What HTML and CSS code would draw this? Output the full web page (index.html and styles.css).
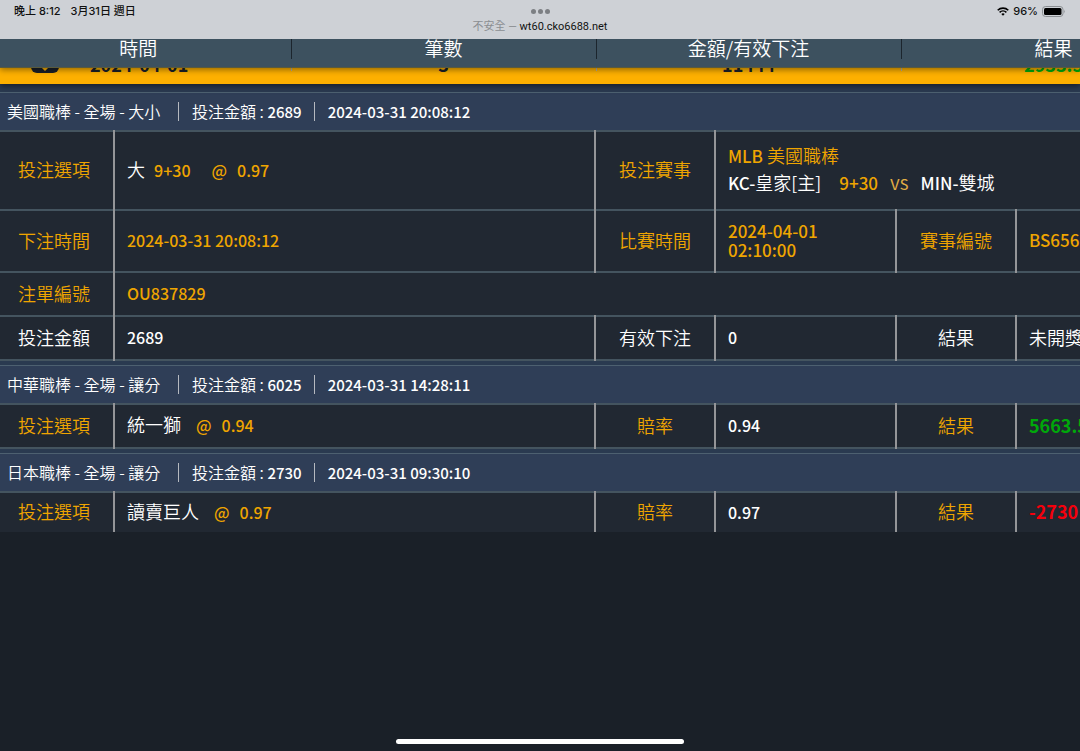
FILE: index.html
```html
<!DOCTYPE html>
<html lang="zh-Hant">
<head>
  <meta charset="UTF-8" />
  <meta name="viewport" content="width=device-width, initial-scale=1.0"/>
  <title>wt60.cko6688.net</title>
  <link rel="stylesheet" href="styles.css">
</head>
<body>

  <!-- Tablet status bar -->
  <div class="status-bar">
    <div class="status-left"><span>晚上 8:12</span><span>3月31日 週日</span></div>
    <div class="status-center">
      <div class="dots"><i></i><i></i><i></i></div>
      <div class="address"><span>不安全 —</span> wt60.cko6688.net</div>
    </div>
    <div class="status-right">
      <svg class="wifi" viewBox="0 0 12 9">
        <path d="M6 8.8 4.3 7a2.5 2.5 0 0 1 3.4 0z" fill="#000"/>
        <path d="M2.6 5.4a4.9 4.9 0 0 1 6.8 0M.7 3.3a7.6 7.6 0 0 1 10.6 0" fill="none" stroke="#000" stroke-width="1.6"/>
      </svg>
      <span>96%</span>
      <svg class="battery" viewBox="0 0 24 11">
        <rect x=".5" y=".5" width="20.5" height="10" rx="3" fill="none" stroke="#8b8f93"/>
        <rect x="2" y="2" width="17.5" height="7" rx="1.5" fill="#000"/>
        <path d="M22.2 3.8q1.5 1.7 0 3.4z" fill="#8b8f93"/>
      </svg>
    </div>
  </div>

  <main>
    <div class="columns head">
      <div>時間</div>
      <div>筆數</div>
      <div>金額/有效下注</div>
      <div>結果</div>
    </div>

    <div class="columns summary">
      <div class="day">
        <svg class="toggle" viewBox="0 0 28 25">
          <rect width="28" height="25" rx="6" fill="#1a2028"/>
          <path d="M8 15l6 6 6-6" fill="none" stroke="#fdb000" stroke-width="3"/>
        </svg>
        2024-04-01
      </div>
      <div>3</div>
      <div>11444</div>
      <div class="win">2933.5</div>
    </div>

    <section class="bet">
      <h2><span>美國職棒 - 全場 - 大小</span><span>投注金額 : <b>2689</b></span><span><b>2024-03-31 20:08:12</b></span></h2>
      <table>
        <colgroup><col class="label first"><col><col class="label"><col class="value"><col class="label"><col class="value"></colgroup>
        <tr class="tall gold">
          <th>投注選項</th>
          <td><span class="white">大</span> <b class="line">9+30</b> <b class="odds">@</b> <b>0.97</b></td>
          <th>投注賽事</th>
          <td class="event" colspan="3">
            <b>MLB</b> 美國職棒<br>
            <span class="white"><b>KC-</b>皇家[主]</span> <b class="handicap">9+30</b> <span class="vs">vs</span> <span class="white"><b>MIN-</b>雙城</span>
          </td>
        </tr>
        <tr class="medium gold">
          <th>下注時間</th>
          <td><b>2024-03-31 20:08:12</b></td>
          <th>比賽時間</th>
          <td class="event two-line"><b>2024-04-01<br>02:10:00</b></td>
          <th>賽事編號</th>
          <td class="event"><b>BS656</b></td>
        </tr>
        <tr class="gold">
          <th>注單編號</th>
          <td colspan="5"><b>OU837829</b></td>
        </tr>
        <tr>
          <th>投注金額</th>
          <td><b>2689</b></td>
          <th>有效下注</th>
          <td><b>0</b></td>
          <th>結果</th>
          <td>未開獎</td>
        </tr>
      </table>
    </section>

    <section class="bet">
      <h2><span>中華職棒 - 全場 - 讓分</span><span>投注金額 : <b>6025</b></span><span><b>2024-03-31 14:28:11</b></span></h2>
      <table>
        <colgroup><col class="label first"><col><col class="label"><col class="value"><col class="label"><col class="value"></colgroup>
        <tr class="gold">
          <th>投注選項</th>
          <td><span class="white">統一獅</span> <b class="at">@</b> <b>0.94</b></td>
          <th>賠率</th>
          <td class="white"><b>0.94</b></td>
          <th>結果</th>
          <td class="win"><b>5663.5</b></td>
        </tr>
      </table>
    </section>

    <section class="bet">
      <h2><span>日本職棒 - 全場 - 讓分</span><span>投注金額 : <b>2730</b></span><span><b>2024-03-31 09:30:10</b></span></h2>
      <table>
        <colgroup><col class="label first"><col><col class="label"><col class="value"><col class="label"><col class="value"></colgroup>
        <tr class="gold last">
          <th>投注選項</th>
          <td><span class="white">讀賣巨人</span> <b class="at">@</b> <b>0.97</b></td>
          <th>賠率</th>
          <td class="white"><b>0.97</b></td>
          <th>結果</th>
          <td class="lose"><b>-2730</b></td>
        </tr>
      </table>
    </section>
  </main>

  <div class="home-bar"></div>

</body>
</html>
```
FILE: styles.css
```css
* {
  box-sizing: border-box;
}

body {
  margin: 0;
  min-height: 100vh;
  display: flex;
  flex-direction: column;
  overflow: hidden;
  background: #1a2028;
  color: white;
  font-family: "Noto Sans CJK TC", sans-serif;
}

/* Status bar */
.status-bar {
  position: relative;
  z-index: 3;
  display: grid;
  grid-template-columns: 1fr auto 1fr;
  height: 39px;
  padding: 0 14px;
  background: #ced1d6;
  color: #111;
  font: 500 11px/22px Inter, "Noto Sans CJK TC", sans-serif;
}

.status-left {
  display: flex;
  gap: 10px;
}

.status-right {
  display: flex;
  justify-content: flex-end;
  align-items: center;
  gap: 4px;
  height: 22px;
}

.wifi {
  width: 12px;
  height: 9px;
}

.battery {
  width: 24px;
  height: 11px;
}

.dots {
  display: flex;
  justify-content: center;
  gap: 2px;
  padding-top: 9px;
}

.dots i {
  width: 5px;
  height: 5px;
  border-radius: 50%;
  background: #7c7f83;
}

.address {
  font-family: Roboto, "Noto Sans CJK TC", sans-serif;
  font-weight: 400;
  line-height: 26px;
}

.address span {
  color: #8b8e92;
}

main {
  flex: 1;
}

/* Header and day summary */
.columns {
  display: grid;
  grid-template-columns: 27% repeat(3, 305px);
  text-align: center;
}

.head {
  position: relative;
  z-index: 2;
  height: 29px;
  padding-bottom: 8px;
  background: #3d515f;
  border-bottom: 1px solid #5a5a3c;
  font-size: 19px;
  font-weight: 350;
  line-height: 18px;
  box-shadow: 0 2px 6px rgba(0,0,0,0.4);
}

.head div {
  border-right: 1px solid #1c252d;
}

.head div:first-child {
  padding-right: 14px;
}

.summary {
  position: relative;
  grid-template-rows: 23px;
  height: 36px;
  margin-top: -20px;
  background: #fdb000;
  color: #1a2028;
  font-size: 18px;
  font-weight: 700;
  line-height: 32px;
  box-shadow: 0 2px 6px rgba(0,0,0,0.5);
}

.summary div {
  border-right: 1px solid #aaa;
}

.day {
  display: flex;
  align-items: flex-start;
  gap: 31px;
  padding-left: 31px;
}

.toggle {
  width: 28px;
  height: 25px;
}

/* Bets */
.bet {
  padding-top: 4px;
  background: #2a3a50;
}

.summary + .bet {
  padding-top: 8px;
}

.bet h2 {
  display: flex;
  align-items: center;
  height: 38px;
  margin: 0;
  padding: 0 0 1px 7px;
  border-top: 1px solid #4d6070;
  background: #2f3e57;
  font-size: 16px;
  font-weight: 350;
  line-height: 18px;
}

.bet h2 span:first-child {
  min-width: 159px;
}

.bet h2 span + span {
  margin-left: 12px;
  padding-left: 13px;
  border-left: 1px solid #b5b9c0;
}

b {
  font-weight: 500;
  font-size: 16px;
}

.bet h2 b {
  font-size: 15px;
}

table {
  width: calc(100% + 118px);
  table-layout: fixed;
  border-collapse: collapse;
  background: #212832;
  font-size: 18px;
  line-height: 26px;
}

col.label {
  width: 120px;
}

col.first {
  width: 114px;
}

col.value {
  width: 181px;
}

tr {
  height: 44px;
  border-top: 2px solid #44545f;
  border-bottom: 2px solid #44545f;
}

.tall {
  height: 79px;
}

.medium {
  height: 62px;
}

.last {
  height: 40px;
  border-bottom: 0;
}

th {
  padding: 0 0 3px;
  font-weight: 350;
}

td {
  padding: 0 12px 3px;
  font-weight: 350;
}

th, td {
  border-right: 2px solid #949598;
}

th:first-child {
  padding-right: 5px;
}

.gold {
  color: #efa500;
}

.white {
  color: white;
}

.line {
  margin-left: 5px;
}

.odds {
  margin: 0 6px 0 17px;
}

.at {
  margin: 0 6px 0 11px;
}

.event b {
  font-size: 17px;
}

.handicap {
  margin: 0 8px 0 14px;
}

.vs {
  margin-right: 8px;
  color: #e2ae45;
  font-size: 19px;
}

.two-line {
  line-height: 18px;
}

.win {
  color: #00a80a;
}

.lose {
  color: #f5000c;
}

.win b, .lose b {
  font-size: 18px;
  font-weight: 700;
}

.home-bar {
  width: 288px;
  height: 5px;
  margin: 0 auto 7px;
  border-radius: 3px;
  background: white;
}
```
